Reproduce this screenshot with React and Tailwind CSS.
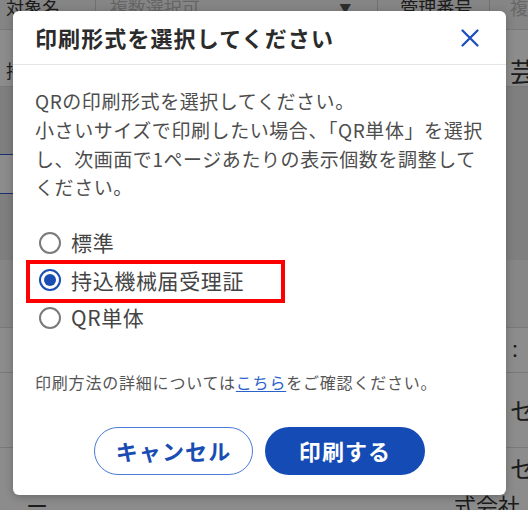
import React from "react";

const jp = "font-['Noto_Sans_CJK_JP','Noto_Sans',sans-serif]";

function Radio({ checked }) {
  return (
    <span
      className={
        "flex h-[22px] w-[22px] shrink-0 items-center justify-center rounded-full border-2 " +
        (checked ? "border-[#1a4db3]" : "border-[#7a7a7a]")
      }
    >
      {checked && <span className="h-[12px] w-[12px] rounded-full bg-[#1a4db3]" />}
    </span>
  );
}

export default function App() {
  const options = [
    { label: "標準", checked: false },
    { label: "持込機械届受理証", checked: true, marked: true },
    { label: "QR単体", checked: false },
  ];

  return (
    <div className={"relative h-[510px] w-[528px] overflow-hidden bg-white " + jp}>
      {/* page behind the dialog */}
      <div className="flex flex-col text-[18px] text-[#333]">
        <div className="-mt-[14px] flex h-[44px] items-center bg-[#f2f2f2] border-b border-[#ddd]">
          <span className="w-[95px] pl-[6px]">対象名</span>
          <span className="flex w-[283px] items-center justify-between border-l border-[#ccc] pl-[14px] pr-[26px] text-[#bbb]">
            複数選択可
            <span className="text-[12px] text-[#555]">▼</span>
          </span>
          <span className="w-[112px] border-l border-[#ccc] pl-[22px]">管理番号</span>
          <span className="border-l border-[#ccc] pl-[20px] text-[#bbb]">複</span>
        </div>
        <div className="flex h-[57px] items-end justify-between border-b border-[#ddd] pb-[2px]">
          <span className="pl-[6px]">持</span>
          <span className="-mr-[8px] text-[26px] leading-none">芸</span>
        </div>
        <div className="flex h-[173px] flex-col justify-center bg-[#e8e8e8]">
          <div className="-ml-[40px] h-[40px] w-[80px] rounded-[20px] border border-[#2d5bd0] bg-white" />
        </div>
        <div className="h-[68px] border-b border-[#ddd] bg-[#f4f4f4]" />
        <div className="flex h-[45px] items-center justify-end border-b border-[#ddd] pr-[4px]">：</div>
        <div className="flex h-[75px] items-center justify-end border-b border-[#ddd] text-[24px]">
          <span className="-mr-[6px]">セ</span>
        </div>
        <div className="flex h-[40px] items-center justify-end text-[24px]">
          <span className="-mr-[6px]">セ</span>
        </div>
        <div className="flex items-center justify-between pl-[26px] pr-[8px] text-[22px]">
          <span>ー</span>
          <span>式会社</span>
        </div>
      </div>

      <div className="absolute inset-0 bg-black/45" />

      {/* dialog */}
      <div className="absolute inset-0 pl-[13px] pt-[11px]">
        <div className="flex w-[493px] flex-col rounded-[6px] bg-white shadow-[0_2px_8px_rgba(0,0,0,0.25)]">
          <div className="flex h-[54px] items-center justify-between border-b border-[#e6e6e6] pl-[22px] pr-[26px]">
            <h2 className="text-[22px] font-bold tracking-[0.05em] text-[#2b2b2b]">印刷形式を選択してください</h2>
            <svg width="20" height="20" viewBox="0 0 20 20" fill="none">
              <path d="M2.5 2.5L17.5 17.5M17.5 2.5L2.5 17.5" stroke="#1d4fbf" strokeWidth="2.3" strokeLinecap="round" />
            </svg>
          </div>

          <div className="flex flex-col px-[22px] pb-[20px] pt-[22px]">
            <p className="whitespace-nowrap text-[19px] leading-[28.8px] tracking-[0.03em] text-[#4d4d4d]">
              QRの印刷形式を選択してください。
              <br />
              小さいサイズで印刷したい場合、「QR単体」を選択
              <br />
              し、次画面で1ページあたりの表示個数を調整して
              <br />
              ください。
            </p>

            <div className="mt-[22px] flex flex-col">
              {options.map((o) => (
                <label key={o.label} className="relative flex h-[37.5px] items-center gap-[10px] pl-[4px]">
                  <Radio checked={o.checked} />
                  <span className="text-[21px] tracking-[0.03em] text-[#444]">{o.label}</span>
                  {o.marked && (
                    <span className="absolute -left-[9px] -top-[2px] h-[43px] w-[259px] border-[4px] border-[#ff0000]" />
                  )}
                </label>
              ))}
            </div>

            <p className="mt-[33px] text-[16px] leading-[24px] tracking-[0.05em] text-[#555]">
              印刷方法の詳細については
              <span className="text-[#2a62c9] underline underline-offset-2">こちら</span>
              をご確認ください。
            </p>

            <div className="mt-[33px] flex justify-center gap-[12px]">
              <button className="h-[48px] w-[159px] rounded-full border-[1.5px] border-[#4a7bd6] bg-white text-[22px] font-bold tracking-[0.05em] text-[#1a4db3]">
                キャンセル
              </button>
              <button className="h-[48px] w-[160px] rounded-full bg-[#154bb5] text-[22px] font-bold tracking-[0.05em] text-white">
                印刷する
              </button>
            </div>
          </div>
        </div>
      </div>
    </div>
  );
}
